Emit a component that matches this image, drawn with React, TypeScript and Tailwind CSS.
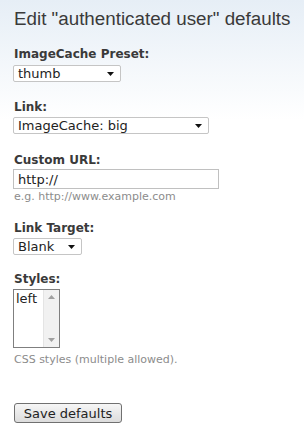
import React from "react";

const Arrow = () => (
  <svg width="7" height="4" viewBox="0 0 7 4" className="shrink-0">
    <path d="M0 0 H7 L3.5 4 Z" fill="#111" />
  </svg>
);

function Select({ value, width }: { value: string; width: string }) {
  return (
    <div
      className={`${width} h-[17px] flex items-center justify-between pl-[4px] pr-[6px] bg-white border border-[#c5c5c5] rounded-[2px] text-[13px] leading-none text-[#222]`}
      style={{ fontFamily: '"DejaVu Sans", Verdana, sans-serif' }}
    >
      <span>{value}</span>
      <Arrow />
    </div>
  );
}

function Label({ children, className = "" }: { children: React.ReactNode; className?: string }) {
  return (
    <div
      className={`text-[12px] leading-[16px] font-bold text-[#3a3a3a] ${className}`}
      style={{ fontFamily: '"DejaVu Sans", Verdana, sans-serif' }}
    >
      {children}
    </div>
  );
}

function Help({ children, className = "" }: { children: React.ReactNode; className?: string }) {
  return (
    <div
      className={`text-[11px] leading-[14px] text-[#8c8c8c] ${className}`}
      style={{ fontFamily: '"DejaVu Sans", Verdana, sans-serif' }}
    >
      {children}
    </div>
  );
}

export default function App() {
  return (
    <div className="w-[304px] h-[436px] overflow-hidden bg-[linear-gradient(to_bottom,#e6eef6_0px,#ffffff_120px)] pl-[13px] pt-[8px]">
      <h2
        className="text-[18.8px] leading-[22px] text-[#3a3a3a] ml-[1px]"
        style={{ fontFamily: '"Liberation Sans", Arial, sans-serif' }}
      >
        Edit "authenticated user" defaults
      </h2>

      <Label className="mt-[16px] ml-[1px]">ImageCache Preset:</Label>
      <div className="mt-[3px]">
        <Select value="thumb" width="w-[108px]" />
      </div>

      <Label className="mt-[17px] ml-[1px]">Link:</Label>
      <div className="mt-[2px]">
        <Select value="ImageCache: big" width="w-[196px]" />
      </div>

      <Label className="mt-[18px] ml-[1px]">Custom URL:</Label>
      <div
        className="mt-[1px] w-[206px] h-[20px] flex items-center pl-[4px] bg-white border border-[#c0c0c0] text-[13px] leading-none text-[#222]"
        style={{ fontFamily: '"DejaVu Sans", Verdana, sans-serif' }}
      >
        http://
      </div>
      <Help className="mt-[1px] ml-[1px]">e.g. http://www.example.com</Help>

      <Label className="mt-[16px] ml-[1px]">Link Target:</Label>
      <div className="mt-[2px]">
        <Select value="Blank" width="w-[69px]" />
      </div>

      <Label className="mt-[16px] ml-[1px]">Styles:</Label>
      <div
        className="mt-[2px] w-[47px] h-[59px] flex bg-white border border-[#7f7f7f] text-[13px] leading-[15px] text-[#222]"
        style={{ fontFamily: '"DejaVu Sans", Verdana, sans-serif' }}
      >
        <div className="flex-1 pl-[2px] pt-[1px]">left</div>
        <div className="w-[16px] h-full flex flex-col items-center justify-between py-[5px] bg-[#f1f1f1] border-l border-[#e4e4e4]">
          <svg width="7" height="4" viewBox="0 0 7 4">
            <path d="M0 4 H7 L3.5 0 Z" fill="#a0a0a0" />
          </svg>
          <svg width="7" height="4" viewBox="0 0 7 4">
            <path d="M0 0 H7 L3.5 4 Z" fill="#a0a0a0" />
          </svg>
        </div>
      </div>
      <Help className="mt-[5px] ml-[1px]">CSS styles (multiple allowed).</Help>

      <button
        className="mt-[36px] ml-[1px] w-[108px] h-[20px] flex items-center justify-center border border-[#707070] rounded-[3px] bg-[linear-gradient(to_bottom,#f6f6f6,#dcdcdc)] text-[13px] leading-none text-[#222]"
        style={{ fontFamily: '"DejaVu Sans", Verdana, sans-serif' }}
      >
        Save defaults
      </button>
    </div>
  );
}
